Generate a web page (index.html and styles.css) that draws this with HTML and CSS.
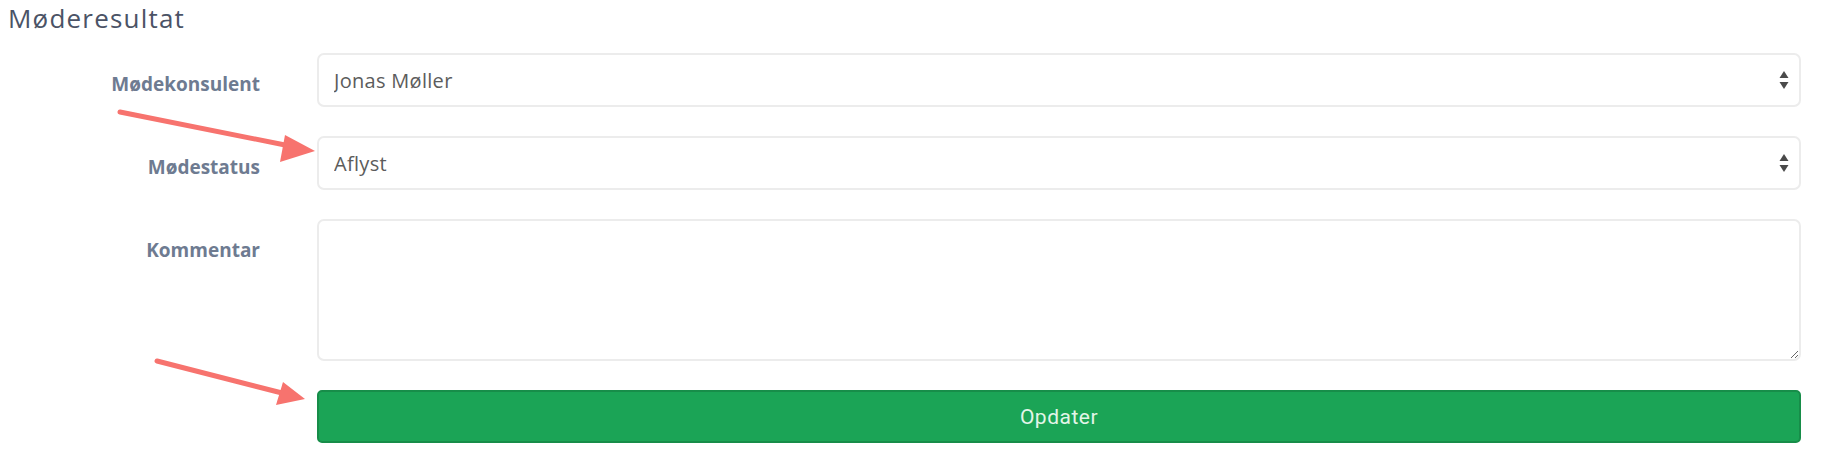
FILE: index.html
```html
<!DOCTYPE html>
<html lang="da">
<head>
    <meta charset="UTF-8">
    <meta name="viewport" content="width=device-width, initial-scale=1.0">
    <title>Møderesultat</title>
    <link rel="stylesheet" href="styles.css">
</head>
<body>
<div class="page">
    <h2 class="title">Møderesultat</h2>

    <form class="result-form">
        <label class="label" for="konsulent">Mødekonsulent</label>
        <div class="select-wrap">
            <select id="konsulent" class="field">
                <option>Jonas Møller</option>
            </select>
            <svg class="select-icon" width="10" height="20" viewBox="0 0 10 20">
                <path d="M5 1 L9.5 8 L0.5 8 Z" fill="#4a4a4a"/>
                <path d="M0.5 12 L9.5 12 L5 19 Z" fill="#4a4a4a"/>
            </svg>
        </div>

        <label class="label" for="status">Mødestatus</label>
        <div class="select-wrap">
            <select id="status" class="field">
                <option>Aflyst</option>
            </select>
            <svg class="select-icon" width="10" height="20" viewBox="0 0 10 20">
                <path d="M5 1 L9.5 8 L0.5 8 Z" fill="#4a4a4a"/>
                <path d="M0.5 12 L9.5 12 L5 19 Z" fill="#4a4a4a"/>
            </svg>
        </div>

        <label class="label" for="kommentar">Kommentar</label>
        <textarea id="kommentar" class="field comment"></textarea>

        <span></span>
        <button type="button" class="submit">Opdater</button>
    </form>

    <!-- annotation arrows -->
    <svg class="arrows" width="1826" height="452" viewBox="0 0 1826 452">
        <line x1="120" y1="112" x2="290" y2="146" stroke="#f7736e" stroke-width="5" stroke-linecap="round"/>
        <path d="M315 151 L285 135 L280 162 Z" fill="#f7736e"/>
        <line x1="157" y1="361" x2="282" y2="393" stroke="#f7736e" stroke-width="5" stroke-linecap="round"/>
        <path d="M305 399 L283 382 L276 405 Z" fill="#f7736e"/>
    </svg>
</div>
</body>
</html>
```

FILE: styles.css
```css
body{
    margin: 0;
    background: #fff;
    font-family: 'Open Sans', 'Noto Sans', Arial, sans-serif;
}
.page{
    position: relative;
    padding: 2px 25px 0 8px;
}
.title{
    margin: 0;
    font-size: 26px;
    line-height: 32px;
    font-weight: 500;
    letter-spacing: 1.2px;
    color: #4b5366;
}
.result-form{
    display: grid;
    grid-template-columns: 252px 1fr;
    column-gap: 57px;
    row-gap: 29px;
    margin-top: 19px;
}
.label{
    text-align: right;
    font-size: 19px;
    line-height: 24px;
    font-weight: 700;
    color: #6e7b91;
    padding-top: 19px;
}
.select-wrap{
    position: relative;
}
.field{
    box-sizing: border-box;
    width: 100%;
    border: 2px solid #ececec;
    border-radius: 7px;
    background: #fff;
    font-family: 'Open Sans', 'Noto Sans', Arial, sans-serif;
    font-size: 20px;
    letter-spacing: 0.3px;
    color: #5c5c5c;
    outline: none;
}
select.field{
    appearance: none;
    -webkit-appearance: none;
    height: 54px;
    padding: 0 15px;
}
.select-icon{
    position: absolute;
    right: 12px;
    top: 17px;
}
.comment{
    height: 142px;
    resize: both;
    padding: 10px 15px;
}
.submit{
    height: 53px;
    border: 2px solid #178d49;
    border-radius: 5px;
    background-color: #1ba456;
    color: #e3f5e8;
    font-family: Roboto, Arial, sans-serif;
    font-size: 21px;
    letter-spacing: 0.5px;
    cursor: pointer;
}
.arrows{
    position: absolute;
    left: 0;
    top: 0;
    pointer-events: none;
}
```
